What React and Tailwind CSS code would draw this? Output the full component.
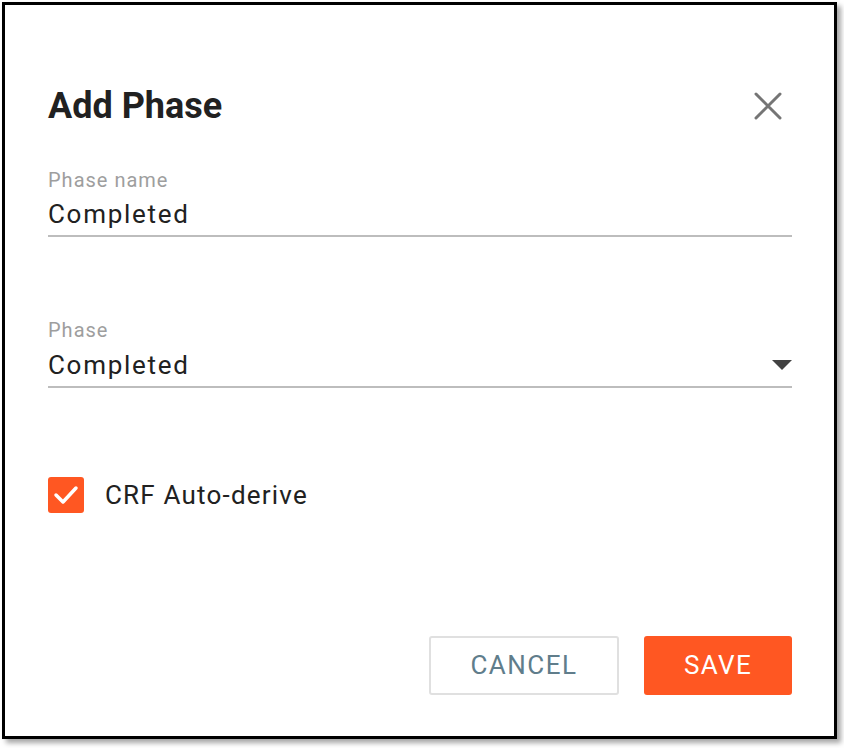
import React from 'react';

export default function App() {
  return (
    <div className="w-[844px] h-[748px] bg-white" style={{ fontFamily: 'Roboto, "Noto Sans", sans-serif' }}>
      <div className="ml-[2px] mt-[2px] w-[835px] h-[737px] border-[3px] border-black bg-white shadow-[4px_4px_5px_rgba(0,0,0,0.35)] flex flex-col pl-[43px] pr-[42px] pt-[81px]">
        {/* Header */}
        <div className="flex items-center justify-between h-[40px]">
          <h1 className="text-[36px] leading-[40px] font-bold text-[#212121]">Add Phase</h1>
          <button className="w-[40px] h-[40px] flex items-center justify-center mr-[4px]">
            <svg width="28" height="28" viewBox="0 0 28 28">
              <path d="M2 2 L26 26 M26 2 L2 26" stroke="#757575" strokeWidth="3" strokeLinecap="round" />
            </svg>
          </button>
        </div>

        {/* Phase name */}
        <div className="mt-[43px] border-b-2 border-[#bdbdbd] pb-[6px]">
          <div className="text-[20px] leading-[22px] text-[#9e9e9e] tracking-[1px]">Phase name</div>
          <div className="mt-[8px] text-[26px] leading-[30px] text-[#212121] tracking-[1.7px]">Completed</div>
        </div>

        {/* Phase select */}
        <div className="mt-[82px] border-b-2 border-[#bdbdbd] pb-[6px]">
          <div className="text-[20px] leading-[22px] text-[#9e9e9e] tracking-[1px]">Phase</div>
          <div className="mt-[9px] flex items-center justify-between">
            <span className="text-[26px] leading-[30px] text-[#212121] tracking-[1.7px]">Completed</span>
            <svg width="20" height="10" viewBox="0 0 20 10">
              <path d="M0 0 L20 0 L10 10 Z" fill="#424242" />
            </svg>
          </div>
        </div>

        {/* Checkbox */}
        <label className="mt-[89px] flex items-center gap-[21px]">
          <span className="w-[36px] h-[36px] rounded-[3px] bg-[#ff5722] flex items-center justify-center">
            <svg width="26" height="20" viewBox="0 0 26 20">
              <path d="M3 10 L10 17 L23 3" stroke="white" strokeWidth="3.5" fill="none" strokeLinecap="round" strokeLinejoin="round" />
            </svg>
          </span>
          <span className="text-[26px] leading-[30px] text-[#212121] tracking-[1.2px]">CRF Auto-derive</span>
        </label>

        {/* Actions */}
        <div className="mt-auto mb-[41px] flex justify-end gap-[25px]">
          <button className="w-[190px] h-[59px] rounded-[3px] border-2 border-[#e0e0e0] text-[26px] text-[#607d8b] tracking-[1.5px]">CANCEL</button>
          <button className="w-[148px] h-[59px] rounded-[3px] bg-[#ff5722] text-[26px] text-white tracking-[1.4px]">SAVE</button>
        </div>
      </div>
    </div>
  );
}
